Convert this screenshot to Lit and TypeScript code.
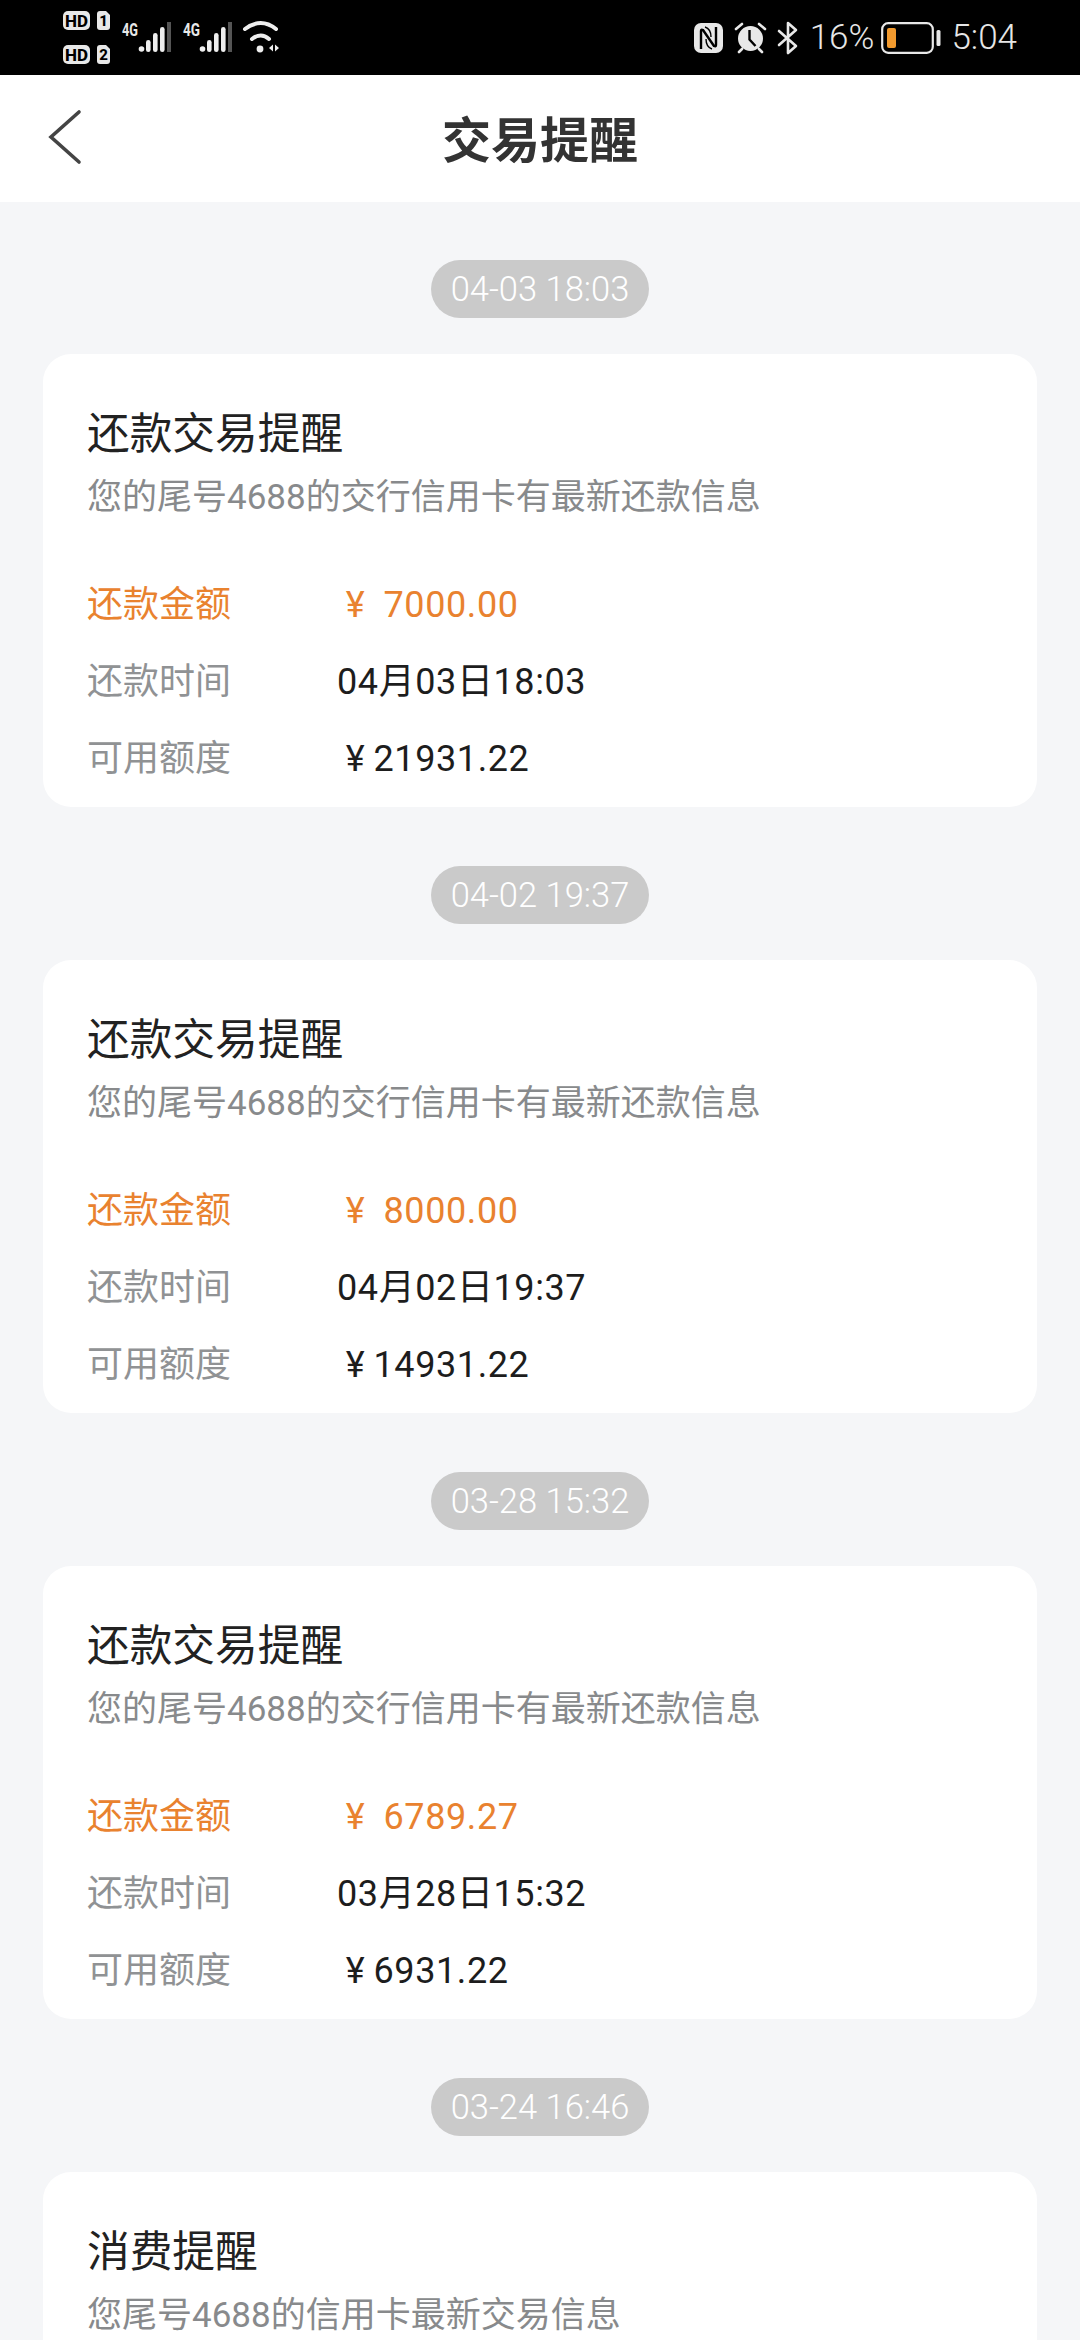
import { LitElement, html, css, svg } from "lit";
import { customElement } from "lit/decorators.js";

const cards = [
  { time: "04-03 18:03", amount: "7000.00", when: "04月03日18:03", quota: "21931.22" },
  { time: "04-02 19:37", amount: "8000.00", when: "04月02日19:37", quota: "14931.22" },
  { time: "03-28 15:32", amount: "6789.27", when: "03月28日15:32", quota: "6931.22" },
];

const bars = (x: number) => svg`
  <circle cx="${x + 2.5}" cy="49" r="2.8" fill="#eee"/>
  <rect x="${x + 7}" y="40" width="4.6" height="12" rx="2.3" fill="#eee"/>
  <rect x="${x + 14}" y="33" width="4.6" height="19" rx="2.3" fill="#eee"/>
  <rect x="${x + 21}" y="27" width="4.6" height="25" rx="2.3" fill="#eee"/>
  <rect x="${x + 28}" y="22" width="4" height="30" fill="#555"/>`;

@customElement("app-root")
export class AppRoot extends LitElement {
  static styles = css`
    :host { display: block; width: 1080px; height: 2340px; overflow: hidden; background: #f5f6f8;
      font-family: "Roboto", "Noto Sans CJK SC", sans-serif; }
    .status { height: 75px; background: #000; color: #e8e8e8; display: flex; align-items: center; padding: 0 63px 0 62px; box-sizing: border-box; justify-content: space-between; }
    .status-left, .status-right { display: flex; align-items: center; }
    .status-left svg { display: block; }
    .status-text { font-size: 35px; font-weight: 300; color: #e6e6e6; line-height: 40px; }
    .ic-alarm { margin-left: 11px; }
    .ic-bt { margin-left: 10px; }
    .pct { margin-left: 11px; }
    .ic-batt { margin-left: 7px; }
    .clock { margin-left: 10px; }
    .nav { height: 127px; box-sizing: border-box; padding-top: 6px; background: #fff; display: grid; grid-template-columns: 1fr auto 1fr; align-items: center; }
    .back { margin: 0 0 10px 47px; display: block; }
    .nav h1 { margin: 0; font-size: 49px; font-weight: 700; color: #333; line-height: 1; }
    .list { display: flex; flex-direction: column; align-items: center; padding-top: 58px; }
    .pill { width: 218px; height: 58px; border-radius: 29px; background: #cacaca; color: #fff; font-size: 34.5px; font-weight: 300; display: flex; align-items: center; justify-content: center; margin-bottom: 36px; }
    .card { width: 994px; height: 453px; box-sizing: border-box; background: #fff; border-radius: 28px; padding: 50px 44px 0; margin-bottom: 59px; flex: none; }
    .title { font-size: 42.7px; color: #222; line-height: 60px; }
    .sub { font-size: 35px; color: #888a8c; line-height: 48px; margin-top: 10px; white-space: nowrap; }
    .rows { margin-top: 45px; display: flex; flex-direction: column; }
    .row { display: flex; align-items: baseline; line-height: 77px; font-size: 36px; color: #1d1d1d; letter-spacing: 0.6px; }
    .row .label { width: 250px; color: #909294; flex: none; letter-spacing: 0; }
    .row.hl, .row.hl .label { color: #e9822f; }
    .yen { display: inline-block; width: 36px; text-align: center; margin-left: 0.5px; }
    .row.hl .yen { margin-right: 10px; }
  `;

  private hd(y: number, n: string) {
    return svg`
      <rect x="63" y="${y}" width="27" height="19" rx="5" fill="#e8e8e8"/>
      <text x="76.5" y="${y + 15.5}" text-anchor="middle" fill="#000" style="font:800 17px 'Roboto',sans-serif">HD</text>
      <path d="M97 ${y + 3}a3 3 0 0 1 3-3h6l4 4v12a3 3 0 0 1-3 3h-7a3 3 0 0 1-3-3z" fill="#e8e8e8"/>
      <text x="103.5" y="${y + 15}" text-anchor="middle" fill="#000" style="font:800 15px 'Roboto',sans-serif">${n}</text>`;
  }

  private card(c: (typeof cards)[number]) {
    return html`
      <div class="pill">${c.time}</div>
      <div class="card">
        <div class="title">还款交易提醒</div>
        <div class="sub">您的尾号4688的交行信用卡有最新还款信息</div>
        <div class="rows">
          <div class="row hl"><span class="label">还款金额</span><span class="yen">¥</span>${c.amount}</div>
          <div class="row"><span class="label">还款时间</span>${c.when}</div>
          <div class="row"><span class="label">可用额度</span><span class="yen">¥</span>${c.quota}</div>
        </div>
      </div>`;
  }

  render() {
    return html`
      <div class="status">
        <div class="status-left">
          <svg width="220" height="59" viewBox="62 8 220 59">
            ${this.hd(11, "1")}${this.hd(45, "2")}
            <text x="122" y="36" textLength="16" lengthAdjust="spacingAndGlyphs" fill="#e8e8e8" style="font:700 19px 'Roboto',sans-serif">4G</text>
            ${bars(139)}
            <text x="183" y="36" textLength="17" lengthAdjust="spacingAndGlyphs" fill="#e8e8e8" style="font:700 19px 'Roboto',sans-serif">4G</text>
            ${bars(200)}
            <g fill="none" stroke="#eee" stroke-width="4" stroke-linecap="round">
              <path d="M245 29q16-12 31 0"/>
              <path d="M252 39q9-7 17 0"/>
            </g>
            <circle cx="260" cy="49" r="3.4" fill="#eee"/>
            <path d="M273 44.500v7l-4-3.500zM275 44.500v7l4-3.500z" fill="#eee"/>
          </svg>
        </div>
        <div class="status-right">
          <svg width="29" height="30" viewBox="0 0 29 30">
            <rect width="29" height="30" rx="7" fill="#e8e8e8"/>
            <path d="M7 26V8q0-2 2-1l11 16q2 1 2-1V4" fill="none" stroke="#000" stroke-width="2.400"/>
            <path d="M11 4q6 2 6 10M18 26q-6-2-6-10" fill="none" stroke="#000" stroke-width="1.400"/>
          </svg>
          <svg class="ic-alarm" width="33" height="32" viewBox="0 0 33 32">
            <circle cx="16.500" cy="16.500" r="12.500" fill="#e8e8e8"/>
            <path d="M15.500 8v9.500l6 6.500" fill="none" stroke="#000" stroke-width="2.400"/>
            <path d="M2 7l6-5M31 7l-6-5M5 30l3-3M28 30l-3-3" stroke="#e8e8e8" stroke-width="2.600" stroke-linecap="round"/>
          </svg>
          <svg class="ic-bt" width="22" height="34" viewBox="0 0 22 34">
            <path d="M2 10l17 15-8 7V2l8 7L2 24" fill="none" stroke="#e8e8e8" stroke-width="2.600" stroke-linejoin="round" stroke-linecap="round"/>
          </svg>
          <span class="status-text pct">16%</span>
          <svg class="ic-batt" width="60" height="32" viewBox="0 0 60 32">
            <rect x="1.200" y="1.200" width="50.600" height="29.600" rx="6" fill="none" stroke="#e8e8e8" stroke-width="2.200"/>
            <rect x="6" y="6" width="9" height="20" rx="2" fill="#f29a2e"/>
            <rect x="55.500" y="8" width="4" height="16" rx="1.500" fill="#e8e8e8"/>
          </svg>
          <span class="status-text clock">5:04</span>
        </div>
      </div>
      <div class="nav">
        <svg class="back" width="36" height="56" viewBox="0 0 36 56">
          <path d="M32 3L4 28l28 25" fill="none" stroke="#444" stroke-width="3.600" stroke-linecap="round"/>
        </svg>
        <h1>交易提醒</h1>
        <span></span>
      </div>
      <div class="list">
        ${cards.map((c) => this.card(c))}
        <div class="pill">03-24 16:46</div>
        <div class="card">
          <div class="title">消费提醒</div>
          <div class="sub">您尾号4688的信用卡最新交易信息</div>
        </div>
      </div>`;
  }
}
